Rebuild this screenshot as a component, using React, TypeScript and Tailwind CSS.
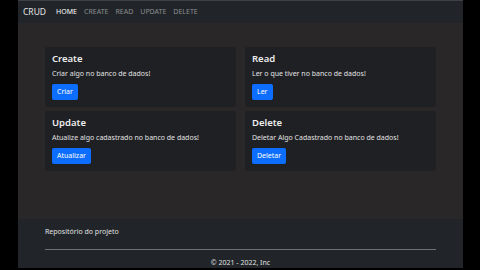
import React from 'react';

const cards = [
  { title: 'Create', text: 'Criar algo no banco de dados!', btn: 'Criar' },
  { title: 'Read', text: 'Ler o que tiver no banco de dados!', btn: 'Ler' },
  { title: 'Update', text: 'Atualize algo cadastrado no banco de dados!', btn: 'Atualizar' },
  { title: 'Delete', text: 'Deletar Algo Cadastrado no banco de dados!', btn: 'Deletar' },
];

const links = ['HOME', 'CREATE', 'READ', 'UPDATE', 'DELETE'];

export default function App() {
  return (
    <div
      className="w-[480px] h-[270px] bg-black flex overflow-hidden"
      style={{ fontFamily: '"Noto Sans", "Open Sans", sans-serif' }}
    >
      <div className="ml-[18px] w-[445px] h-[268px] flex flex-col">
        {/* navbar */}
        <div className="h-px bg-[#3d4145]" />
        <nav className="h-[22px] bg-[#212529] flex items-center pl-[5px] gap-[7px]">
          <span className="text-[8.5px] text-[#e5e5e5] mr-[3px]">CRUD</span>
          {links.map((l, i) => (
            <span key={l} className={`text-[7px] ${i === 0 ? 'text-white' : 'text-[#8a8d91]'}`}>
              {l}
            </span>
          ))}
        </nav>

        {/* main */}
        <main className="flex-1 bg-[#2a2728] px-[27px] pt-[24px]">
          <div className="grid grid-cols-2 gap-x-[9px] gap-y-[4px]">
            {cards.map((c) => (
              <div key={c.title} className="bg-[#1f2024] rounded-[3px] h-[60px] px-[7px] pt-[5px]">
                <h3 className="text-[9.5px] font-semibold text-[#ececec] leading-[14px]">{c.title}</h3>
                <p className="text-[7px] text-[#e2e2e2] leading-[11px] mt-[2px]">{c.text}</p>
                <button className="block mt-[5px] bg-[#0d6efd] text-white text-[7px] rounded-[2px] h-[16px] px-[5px] leading-[16px]">
                  {c.btn}
                </button>
              </div>
            ))}
          </div>
        </main>

        {/* footer */}
        <footer className="h-[49px] bg-[#212529] px-[27px] pt-[7px] flex flex-col">
          <p className="text-[7px] text-[#e0e0e0] leading-[11px]">Repositório do projeto</p>
          <div className="mt-[12px] h-px bg-[#6c6f73]" />
          <p className="text-[7px] text-[#e0e0e0] leading-[11px] text-center mt-[7px]">© 2021 - 2022, Inc</p>
        </footer>
      </div>
    </div>
  );
}
